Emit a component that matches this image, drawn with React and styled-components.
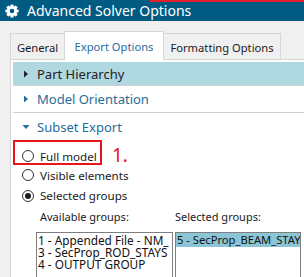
import React from 'react';
import styled, { createGlobalStyle } from 'styled-components';

const Global = createGlobalStyle`
  html, body { margin: 0; padding: 0; background: #f0f0f0; }
  body { font-family: "Noto Sans", "Open Sans", sans-serif; }
`;

const Window = styled.div`
  position: relative;
  width: 304px;
  height: 277px;
  overflow: hidden;
  background: #f0f0f0;
  display: flex;
  flex-direction: column;
`;

const TitleBar = styled.div`
  flex: none;
  height: 21px;
  background: #005b82;
  display: flex;
  align-items: center;
  gap: 8px;
  padding-left: 5px;
  color: #fff;
  font-size: 14px;
  white-space: nowrap;
`;

const RedEdge = styled.div`
  position: absolute;
  top: 0;
  left: 150px;
  right: 0;
  height: 2px;
  background: #e3202b;
`;

const Body = styled.div`
  flex: 1;
  display: flex;
  flex-direction: column;
  padding: 9px 0 0 10px;
  min-height: 0;
`;

const TabStrip = styled.div`
  display: flex;
  align-items: flex-end;
  height: 29px;
  flex: none;
`;

const Tab = styled.div`
  box-sizing: border-box;
  width: ${p => p.$w}px;
  height: ${p => (p.$active ? 29 : 26)}px;
  margin-bottom: ${p => (p.$active ? -1 : 0)}px;
  position: relative;
  z-index: ${p => (p.$active ? 1 : 0)};
  display: flex;
  align-items: center;
  justify-content: center;
  padding-top: ${p => (p.$active ? 0 : 1)}px;
  background: ${p => (p.$active ? '#ffffff' : '#f0f0f0')};
  border: 1px solid #d6d6d6;
  border-bottom: none;
  border-left-width: ${p => (p.$noLeft ? 0 : 1)}px;
  border-right-width: ${p => (p.$noRight ? 0 : 1)}px;
  color: ${p => (p.$active ? '#1f6d99' : '#1a1a1a')};
  font-size: 11.2px;
  white-space: nowrap;
`;

const Panel = styled.div`
  flex: 1;
  background: #ffffff;
  border-top: 1px solid #d6d6d6;
  border-left: 1px solid #d6d6d6;
  padding: 2px 0 0 2px;
  display: flex;
  flex-direction: column;
  min-height: 0;
`;

const Header = styled.div`
  flex: none;
  height: ${p => p.$h}px;
  display: flex;
  align-items: center;
  gap: 7px;
  padding-left: 9px;
  background: ${p => (p.$hl ? '#b0d8e1' : 'transparent')};
  border-bottom: ${p => (p.$line ? '1px solid #cfcfcf' : 'none')};
  color: ${p => (p.$blue ? '#1f6d99' : '#222222')};
  font-size: 13px;
  white-space: nowrap;
`;

const CaretBox = styled.svg`
  width: 8px;
  height: 8px;
  flex: none;
`;

const Caret = ({ down, color }) => (
  <CaretBox viewBox="0 0 8 8">
    {down ? (
      <polygon points="0.5,2 7.5,2 4,6" fill={color} />
    ) : (
      <polygon points="2,0.5 6,4 2,7.5" fill={color} />
    )}
  </CaretBox>
);

const Subset = styled.div`
  display: flex;
  flex-direction: column;
`;

const AnnotRow = styled.div`
  display: flex;
  align-items: center;
  gap: 10px;
`;

const RedBox = styled.div`
  box-sizing: border-box;
  width: 89px;
  height: 25px;
  border: 2px solid #e8141c;
  padding: 6px 0 0 7px;
`;

const AnnotNum = styled.span`
  color: #e8141c;
  font-size: 19px;
  line-height: 20px;
  margin-top: 4px;
`;

const RadioRow = styled.div`
  display: flex;
  align-items: center;
  gap: 6px;
  height: ${p => p.$h || 20}px;
  padding-left: ${p => p.$pl ?? 9}px;
  font-size: 11.6px;
  color: #1a1a1a;
  white-space: nowrap;
`;

const RadioCircle = styled.span`
  box-sizing: border-box;
  width: 12px;
  height: 12px;
  border-radius: 50%;
  border: 1px solid #333333;
  background: #fff;
  display: flex;
  align-items: center;
  justify-content: center;
  flex: none;
  &::after {
    content: '';
    display: ${p => (p.$on ? 'block' : 'none')};
    width: 6px;
    height: 6px;
    border-radius: 50%;
    background: #1a1a1a;
  }
`;

const Groups = styled.div`
  display: grid;
  grid-template-columns: 137px 126px;
  column-gap: 2px;
  row-gap: 7px;
  margin-left: 23px;
  margin-top: 1px;
`;

const GroupLabel = styled.div`
  height: 18px;
  display: flex;
  align-items: center;
  padding-left: ${p => p.$pl}px;
  font-size: 11px;
  color: #1a1a1a;
  white-space: nowrap;
`;

const ListBox = styled.div`
  box-sizing: border-box;
  height: 60px;
  border: 1px solid #7f7f7f;
  background: #fff;
  overflow: hidden;
`;

const ListItem = styled.div`
  height: ${p => (p.$sel ? 14 : 12)}px;
  line-height: ${p => (p.$sel ? 14 : 12)}px;
  padding-left: 1px;
  font-size: ${p => (p.$sel ? 11.2 : 11.8)}px;
  color: #111;
  white-space: nowrap;
  background: ${p => (p.$sel ? '#8cc6d6' : 'transparent')};
  &:first-child { margin-top: ${p => (p.$sel ? 0 : 1)}px; }
`;

const Gear = () => (
  <svg width="14" height="14" viewBox="0 0 14 14">
    <g fill="#fff" transform="translate(7 7)">
      {[0, 45, 90, 135].map(a => (
        <rect key={a} x="-1.6" y="-6.6" width="3.2" height="13.2" rx="0.6" transform={`rotate(${a})`} />
      ))}
      <circle r="5" />
    </g>
    <circle cx="7" cy="7" r="2.3" fill="#005b82" />
  </svg>
);

export default function App() {
  return (
    <>
      <Global />
      <Window>
        <TitleBar>
          <Gear />
          <span>Advanced Solver Options</span>
        </TitleBar>
        <RedEdge />
        <Body>
          <TabStrip>
            <Tab $w={54} $noRight>General</Tab>
            <Tab $w={100} $active>Export Options</Tab>
            <Tab $w={117} $noLeft>Formatting Options</Tab>
          </TabStrip>
          <Panel>
            <Header $h={23} $hl $line>
              <Caret color="#222" />
              Part Hierarchy
            </Header>
            <Header $h={26} $blue $line>
              <Caret color="#1f6d99" />
              Model Orientation
            </Header>
            <Header $h={27} $blue>
              <Caret down color="#1f6d99" />
              Subset Export
            </Header>
            <Subset>
              <AnnotRow>
                <RedBox>
                  <RadioRow $h={16} $pl={0}>
                    <RadioCircle />
                    Full model
                  </RadioRow>
                </RedBox>
                <AnnotNum>1.</AnnotNum>
              </AnnotRow>
              <RadioRow>
                <RadioCircle />
                Visible elements
              </RadioRow>
              <RadioRow $h={21}>
                <RadioCircle $on />
                Selected groups
              </RadioRow>
              <Groups>
                <GroupLabel $pl={4}>Available groups:</GroupLabel>
                <GroupLabel $pl={0}>Selected groups:</GroupLabel>
                <ListBox>
                  <ListItem>1 - Appended File - NM_</ListItem>
                  <ListItem>3 - SecProp_ROD_STAYS</ListItem>
                  <ListItem>4 - OUTPUT GROUP</ListItem>
                </ListBox>
                <ListBox>
                  <ListItem $sel>5 - SecProp_BEAM_STAY</ListItem>
                </ListBox>
              </Groups>
            </Subset>
          </Panel>
        </Body>
      </Window>
    </>
  );
}
